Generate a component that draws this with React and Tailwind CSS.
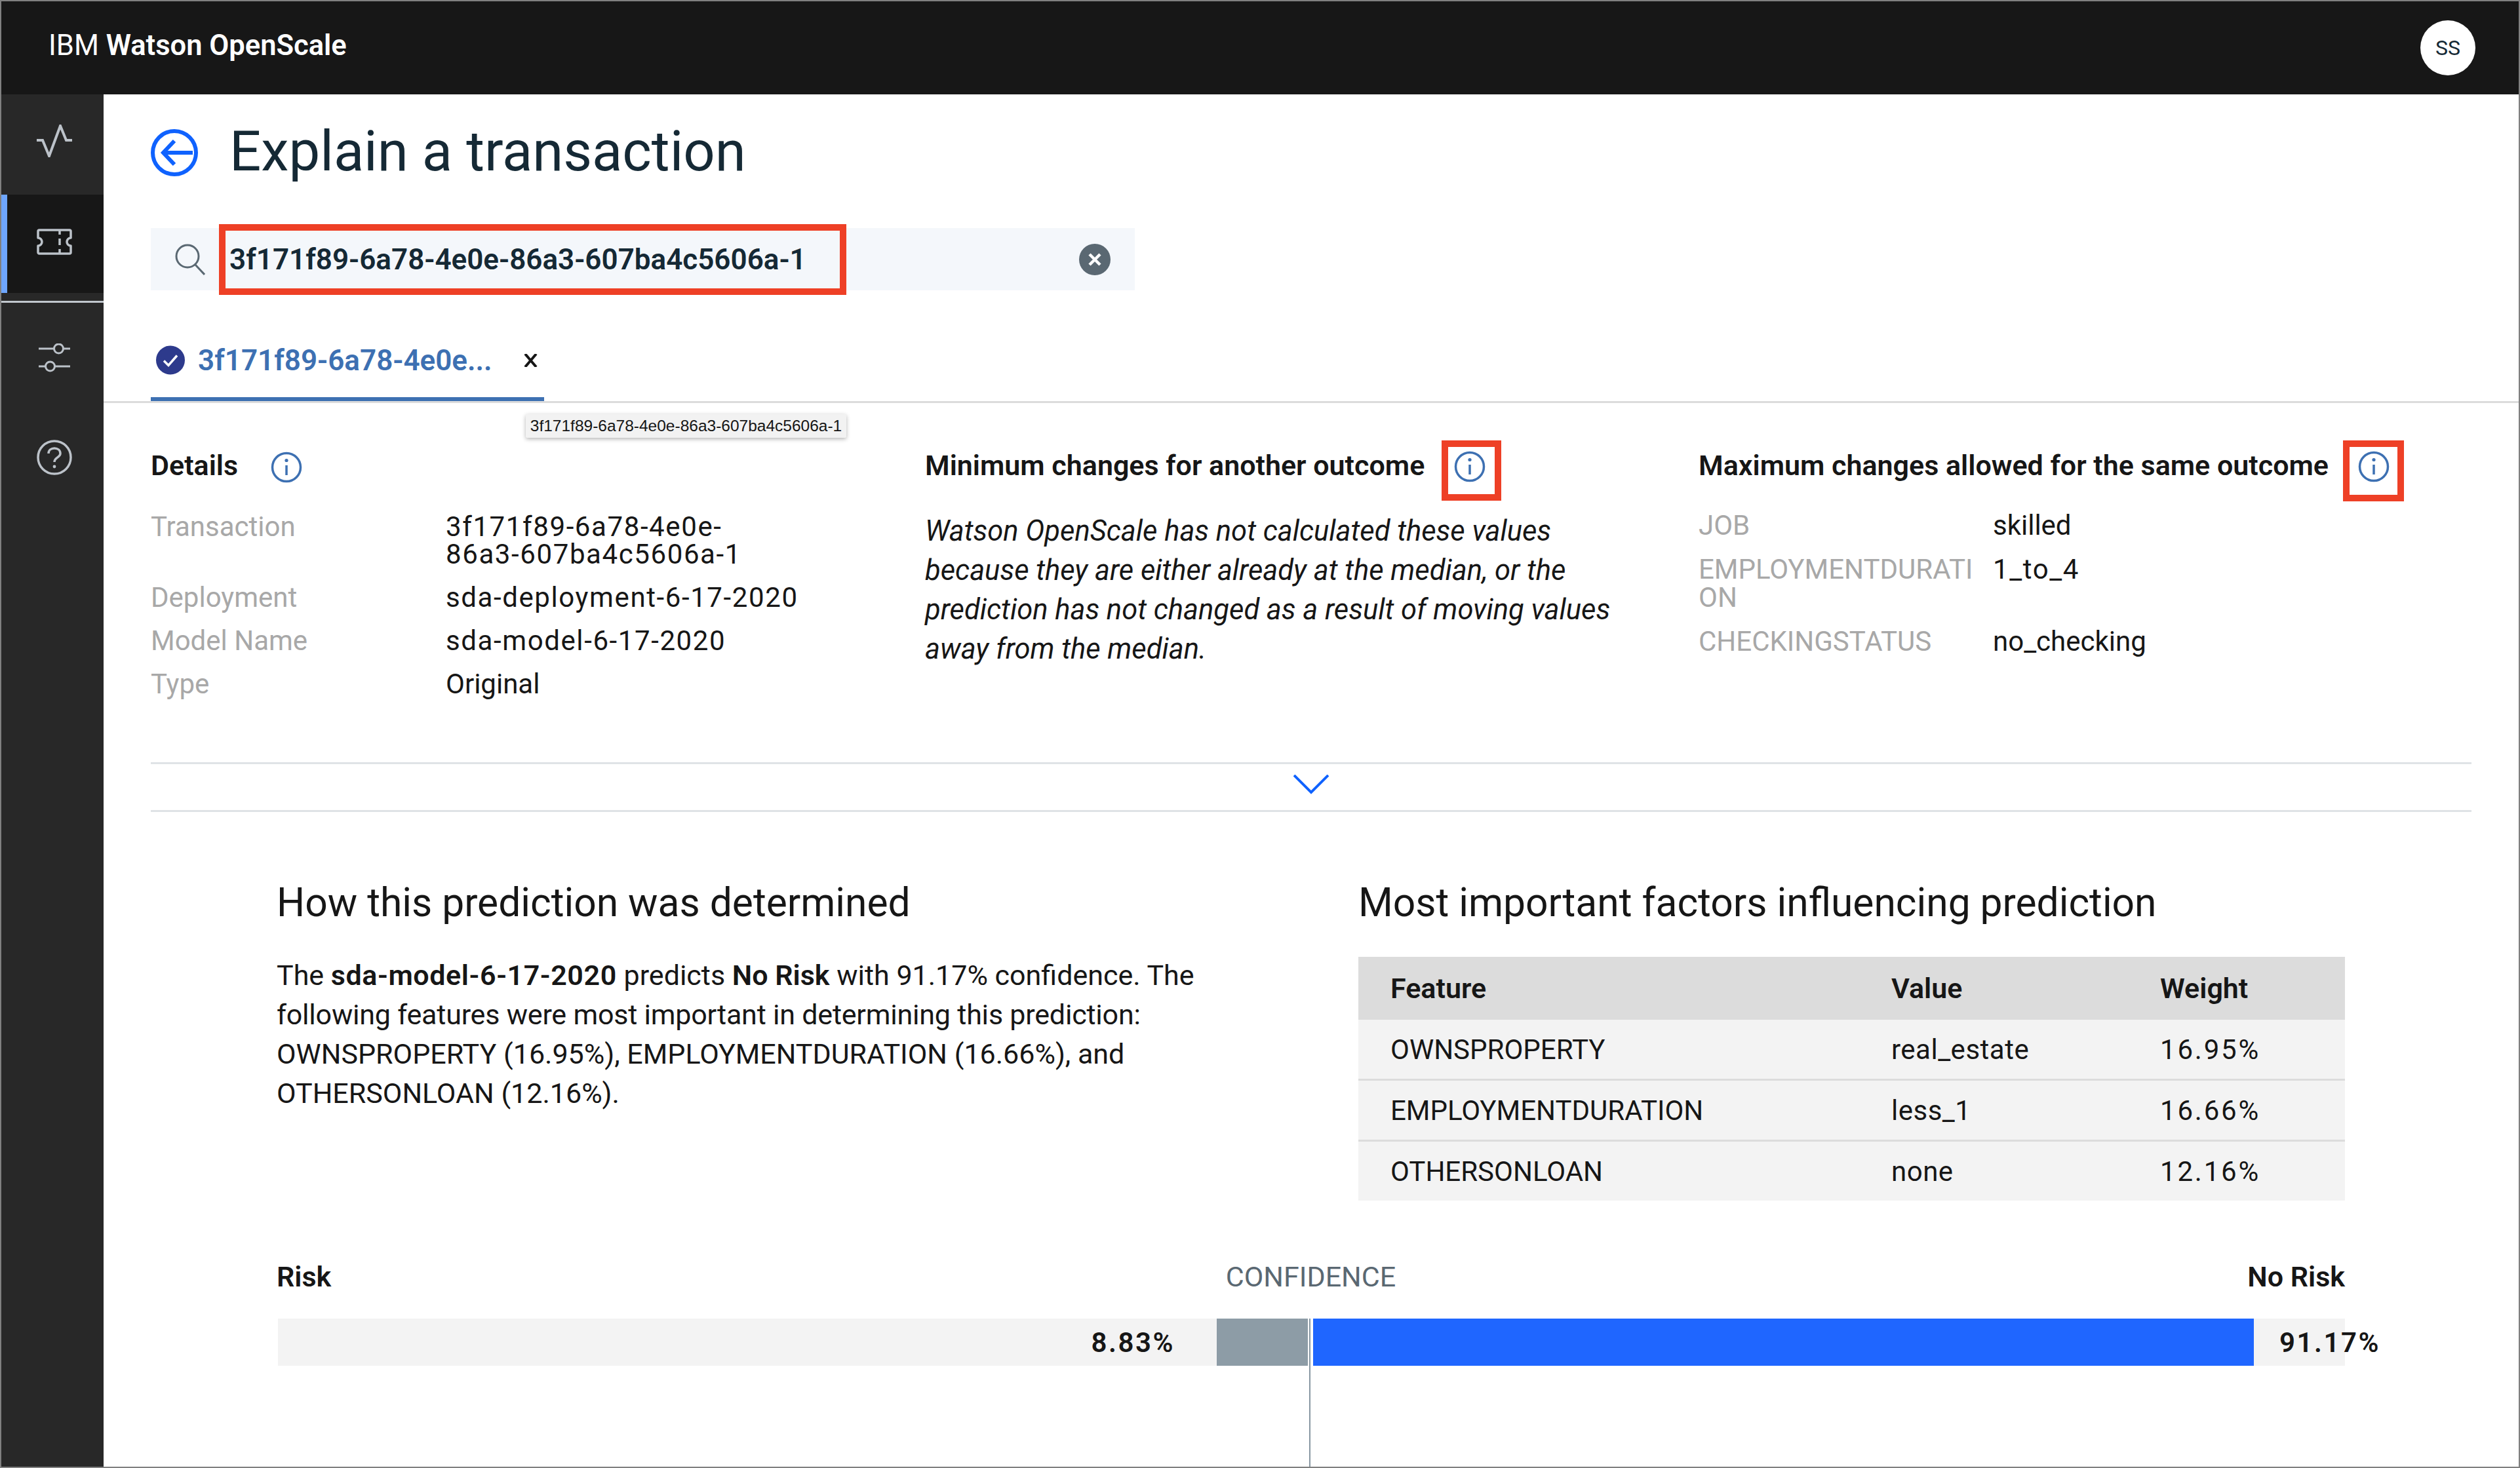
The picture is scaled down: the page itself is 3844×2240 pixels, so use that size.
import React from 'react';

const InfoIcon = ({ className }) => (
  <svg viewBox="0 0 48 48" className={className} fill="none" stroke="#3d70b2">
    <circle cx="24" cy="24" r="21.5" strokeWidth="3.5" />
    <path d="M24 21v15" strokeWidth="3.5" />
    <circle cx="24" cy="13.5" r="2.6" fill="#3d70b2" stroke="none" />
  </svg>
);

const detailRows = [
  ['Transaction', <>3f171f89-6a78-4e0e-<br />86a3-607ba4c5606a-1</>, 'tracking-[1.6px]'],
  ['Deployment', 'sda-deployment-6-17-2020', 'tracking-[1.6px]'],
  ['Model Name', 'sda-model-6-17-2020', 'tracking-[1.6px]'],
  ['Type', 'Original', ''],
];

const maxRows = [
  ['JOB', 'skilled', ''],
  ['EMPLOYMENTDURATION', '1_to_4', 'tracking-[1.6px]'],
  ['CHECKINGSTATUS', 'no_checking', ''],
];

const factors = [
  ['OWNSPROPERTY', 'real_estate', '16.95%'],
  ['EMPLOYMENTDURATION', 'less_1', '16.66%'],
  ['OTHERSONLOAN', 'none', '12.16%'],
];

function Sidebar() {
  return (
    <aside className="w-[156px] shrink-0 bg-[#282828] flex flex-col">
      <div className="h-[153px] flex items-start justify-center pt-[46px] pl-[6px]">
        <svg viewBox="0 0 54 50" className="w-[54px] h-[50px]" fill="none" stroke="#bcc2c9" strokeWidth="4">
          <path d="M0 24h9l10 24L36 2l9 22h9" />
        </svg>
      </div>
      <div className="h-[150px] bg-[#171717] border-l-[9px] border-[#6ea6ff] flex items-start justify-center pt-[52px] pr-[3px]">
        <svg viewBox="0 0 54 40" className="w-[54px] h-[40px]" fill="none" stroke="#bcc2c9" strokeWidth="3.5">
          <path d="M4 2h46a2 2 0 0 1 2 2v10a6 6 0 0 0 0 12v10a2 2 0 0 1-2 2H4a2 2 0 0 1-2-2V26a6 6 0 0 0 0-12V4a2 2 0 0 1 2-2z" strokeLinejoin="round" />
          <path d="M35 2v7M35 15v10M35 31v7" />
        </svg>
      </div>
      <div className="mt-[12px] h-[3px] bg-[#c1c7cd]" />
      <div className="h-[168px] flex items-center justify-center pl-[6px]">
        <svg viewBox="0 0 48 44" className="w-[48px] h-[44px]" fill="none" stroke="#bcc2c9" strokeWidth="3">
          <path d="M0 8h23M38 8h10M0 35h10M25 35h23" />
          <circle cx="30.5" cy="8" r="7" />
          <circle cx="17.5" cy="35" r="7" />
        </svg>
      </div>
      <div className="h-[136px] flex items-center justify-center pl-[6px]">
        <svg viewBox="0 0 54 54" className="w-[54px] h-[54px]" fill="none" stroke="#bcc2c9" strokeWidth="3.5">
          <circle cx="27" cy="27" r="25" />
          <path d="M18 21c0-5 4-8 9-8s9 3 9 8c0 6-9 6-9 13" />
          <circle cx="27" cy="41" r="2.4" fill="#bcc2c9" stroke="none" />
        </svg>
      </div>
    </aside>
  );
}

export default function App() {
  return (
    <div className="w-[3844px] h-[2240px] border-2 border-[#808080] bg-white flex flex-col overflow-hidden [font-family:Roboto,sans-serif] text-[#161616]">
      {/* Top bar */}
      <header className="h-[142px] shrink-0 bg-[#171717] flex items-center justify-between pl-[72px] pr-[66px]">
        <div className="text-[43.5px] leading-none text-white pb-[6px]">
          IBM <span className="font-semibold">Watson OpenScale</span>
        </div>
        <div className="w-[84px] h-[84px] rounded-full bg-white flex items-center justify-center text-[32px] text-[#152935]">
          SS
        </div>
      </header>

      <div className="flex flex-1 min-h-0">
        <Sidebar />

        <main className="flex-1 min-w-0">
          {/* Title */}
          <div className="h-[178px] pl-[72px] flex items-center gap-[48px]">
            <svg viewBox="0 0 72 72" className="w-[72px] h-[72px]" fill="none" stroke="#0f62fe" strokeWidth="6">
              <circle cx="36" cy="36" r="33" />
              <path d="M64 36H20M36 18L19 36l17 18" />
            </svg>
            <h1 className="text-[85px] leading-none text-[#152935] pb-[4px]">Explain a transaction</h1>
          </div>

          {/* Search */}
          <div className="ml-[72px] mt-[26px] w-[1501px] h-[95px] bg-[#f4f7fb] relative flex items-center pl-[37px] pr-[37px]">
            <svg viewBox="0 0 46 48" className="w-[46px] h-[48px] shrink-0" fill="none" stroke="#5a6872" strokeWidth="3">
              <circle cx="19" cy="19" r="17" />
              <path d="M31 32l14 15" />
            </svg>
            <span className="ml-[37px] flex-1 text-[44px] font-semibold text-[#152935]">3f171f89-6a78-4e0e-86a3-607ba4c5606a-1</span>
            <svg viewBox="0 0 48 48" className="w-[48px] h-[48px] shrink-0">
              <circle cx="24" cy="24" r="24" fill="#5a6872" />
              <path d="M16 16l16 16M32 16L16 32" stroke="#fff" strokeWidth="4.5" />
            </svg>
            <div className="absolute left-[104px] top-[-6px] w-[957px] h-[108px] border-[10px] border-[#ee4026]" />
          </div>

          {/* Tab */}
          <div className="relative border-b-[3px] border-[#dcdcdc] pl-[72px] pt-[84px]">
            <div className="w-[600px] h-[85px] border-b-[6px] border-[#3d70b2] flex items-center pl-[8px] pb-[34px]">
              <svg viewBox="0 0 44 44" className="w-[44px] h-[45px] shrink-0">
                <circle cx="22" cy="22" r="22" fill="#2d3a8c" />
                <path d="M12 23l7 7 13-15" fill="none" stroke="#fff" strokeWidth="3.5" />
              </svg>
              <span className="ml-[20px] w-[447px] whitespace-nowrap text-[44px] leading-none font-semibold text-[#3d70b2]">3f171f89-6a78-4e0e...</span>
              <svg viewBox="0 0 23 20" className="ml-[49px] w-[23px] h-[20px] shrink-0" stroke="#161616" strokeWidth="4">
                <path d="M3 0l17 20M20 0L3 20" />
              </svg>
            </div>
            <div className="absolute left-[644px] top-[189px] w-[489px] h-[36px] bg-[#f2f2f2] shadow-[0_2px_6px_rgba(0,0,0,0.3)] flex items-center justify-center text-[24.5px] [font-family:'Liberation_Sans',sans-serif] rounded-[2px] whitespace-nowrap">
              3f171f89-6a78-4e0e-86a3-607ba4c5606a-1
            </div>
          </div>

          {/* Details */}
          <div className="h-[548px] pl-[72px] pt-[65px] grid grid-cols-[1181px_1180px_1fr]">
            <section>
              <div className="flex items-center h-[60px]">
                <h2 className="text-[43px] font-semibold">Details</h2>
                <InfoIcon className="ml-[50px] w-[48px] h-[48px] mt-[6px]" />
              </div>
              <div className="mt-[43px] flex flex-col gap-[24px] text-[42px] leading-[42px]">
                {detailRows.map(([label, value, spacing]) => (
                  <div key={label} className="grid grid-cols-[450px_1fr]">
                    <span className="text-[#a8a8a8]">{label}</span>
                    <span className={spacing}>{value}</span>
                  </div>
                ))}
              </div>
            </section>

            <section>
              <div className="flex items-center h-[60px] relative">
                <h2 className="text-[43px] font-semibold whitespace-nowrap">Minimum changes for another outcome</h2>
                <div className="absolute left-[788px] top-[-8px] w-[91px] h-[92px] border-[10px] border-[#ee4026] flex justify-center pr-[6px] pt-[6px]">
                  <InfoIcon className="w-[48px] h-[48px]" />
                </div>
              </div>
              <p className="mt-[41px] text-[43.5px] leading-[60px] italic whitespace-nowrap">
                Watson OpenScale has not calculated these values<br />
                because they are either already at the median, or the<br />
                prediction has not changed as a result of moving values<br />
                away from the median.
              </p>
            </section>

            <section>
              <div className="flex items-center h-[60px] relative">
                <h2 className="text-[43px] font-semibold whitespace-nowrap">Maximum changes allowed for the same outcome</h2>
                <div className="absolute left-[983px] top-[-8px] w-[93px] h-[93px] border-[10px] border-[#ee4026] flex justify-center pt-[6px]">
                  <InfoIcon className="w-[48px] h-[48px]" />
                </div>
              </div>
              <div className="mt-[40px] flex flex-col gap-[24px] text-[42px] leading-[43px]">
                {maxRows.map(([label, value, spacing]) => (
                  <div key={label} className="grid grid-cols-[449px_1fr]">
                    <span className="text-[#a8a8a8] break-all w-[425px]">{label}</span>
                    <span className={spacing}>{value}</span>
                  </div>
                ))}
              </div>
            </section>
          </div>

          {/* Expand */}
          <div className="ml-[72px] w-[3540px] h-[76px] border-y-[3px] border-[#dfe3e6] flex items-center justify-center pb-[8px]">
            <svg viewBox="0 0 54 30" className="w-[54px] h-[30px]" fill="none" stroke="#0f62fe" strokeWidth="4">
              <path d="M1 1l26 26L53 1" />
            </svg>
          </div>

          {/* Prediction */}
          <div className="pl-[264px] pt-[99px] grid grid-cols-[1650px_1505px]">
            <section>
              <h2 className="text-[60.5px] leading-[80px] text-[#161616]">How this prediction was determined</h2>
              <p className="mt-[40px] text-[43px] leading-[60px] whitespace-nowrap">
                The <b className="font-semibold tracking-[0.6px]">sda-model-6-17-2020</b> predicts <b className="font-semibold">No Risk</b> with 91.17% confidence. The<br />
                <span className="tracking-[-0.2px]">following features were most important in determining this prediction:</span><br />
                OWNSPROPERTY (16.95%), EMPLOYMENTDURATION (16.66%), and<br />
                OTHERSONLOAN (12.16%).
              </p>
            </section>
            <section>
              <h2 className="text-[60.5px] leading-[80px]">Most important factors influencing prediction</h2>
              <div className="mt-[42px] text-[42px]">
                <div className="h-[96px] bg-[#dcdcdc] grid grid-cols-[764px_410px_1fr] items-center pl-[49px] text-[43px] font-semibold">
                  <span>Feature</span><span>Value</span><span>Weight</span>
                </div>
                {factors.map(([feature, value, weight], i) => (
                  <div key={feature} className={`bg-[#f3f3f3] grid grid-cols-[764px_410px_1fr] items-center pl-[49px] ${i === 2 ? 'h-[90px]' : 'h-[93px] border-b-[3px] border-[#dcdcdc]'}`}>
                    <span>{feature}</span><span className="tracking-[0.5px]">{value}</span><span className="tracking-[2.8px]">{weight}</span>
                  </div>
                ))}
              </div>
            </section>
          </div>

          {/* Confidence */}
          <div className="ml-[264px] mt-[84px] w-[3155px] grid grid-cols-3 h-[60px] items-center text-[43px]">
            <span className="font-semibold">Risk</span>
            <span className="text-center text-[#5a6872]">CONFIDENCE</span>
            <span className="text-right font-semibold">No Risk</span>
          </div>
          <div className="ml-[266px] mt-[36px] relative flex h-[72px] text-[42px] font-semibold tracking-[2.5px]">
            <div className="w-[1571px] bg-[#f3f3f3] flex items-center justify-end">
              <span className="mr-[64px]">8.83%</span>
              <div className="w-[139px] h-full bg-[#8d9ca6]" />
            </div>
            <div className="ml-[8px] w-[1574px] bg-[#f3f3f3] flex items-center">
              <div className="w-[1435px] shrink-0 h-full bg-[#1f66ff]" />
              <span className="ml-[39px] whitespace-nowrap">91.17%</span>
            </div>
            <div className="absolute left-[1573px] top-0 w-[2px] h-[226px] bg-[#8897a2]" />
          </div>
        </main>
      </div>
    </div>
  );
}
